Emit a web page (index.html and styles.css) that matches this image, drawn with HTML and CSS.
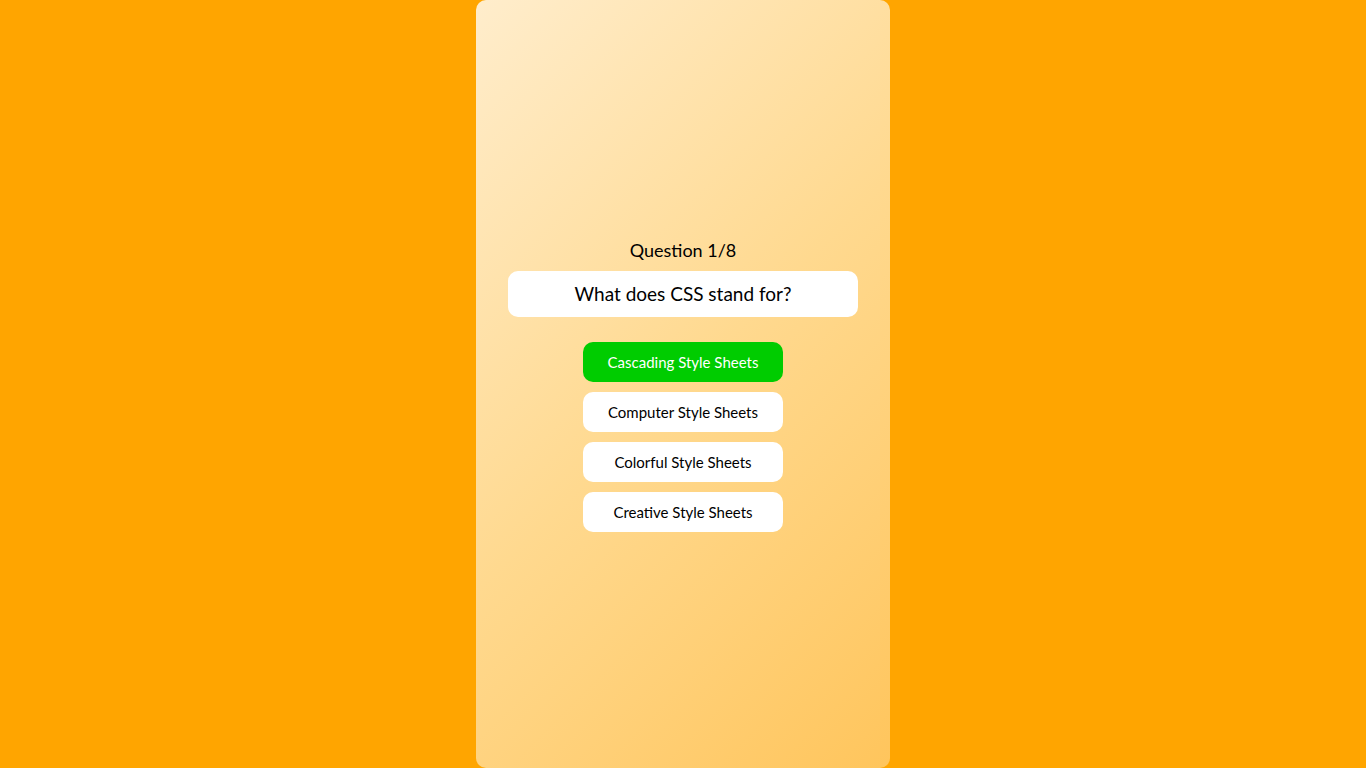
FILE: index.html
```html
<!DOCTYPE html>
<html lang="en">
<head>
<meta charset="utf-8">
<title>Quiz</title>
<link rel="stylesheet" href="styles.css">
</head>
<body>
<main class="card">
  <div class="counter">Question 1/8</div>
  <div class="question">What does CSS stand for?</div>
  <div class="options">
    <button class="option correct">Cascading Style Sheets</button>
    <button class="option">Computer Style Sheets</button>
    <button class="option">Colorful Style Sheets</button>
    <button class="option">Creative Style Sheets</button>
  </div>
</main>
</body>
</html>
```
FILE: styles.css
```css
html, body {
  margin: 0;
  height: 100%;
}
body {
  background: #ffa500;
  font-family: Lato, "Liberation Sans", sans-serif;
  display: flex;
  justify-content: center;
}
.card {
  width: 414px;
  height: 768px;
  border-radius: 10px;
  background: linear-gradient(135deg, #ffedcc 0%, #ffd98f 50%, #ffc55c 100%);
  display: flex;
  flex-direction: column;
  align-items: center;
  justify-content: center;
  box-sizing: border-box;
  padding-top: 2px;
}
.counter {
  font-size: 18px;
  color: #000;
  line-height: 22px;
  margin-bottom: 10px;
}
.question {
  width: 350px;
  height: 46px;
  background: #fff;
  border-radius: 10px;
  display: flex;
  align-items: center;
  justify-content: center;
  font-size: 19px;
  color: #000;
  margin-bottom: 25px;
}
.options {
  display: flex;
  flex-direction: column;
  gap: 10px;
}
.option {
  width: 200px;
  height: 40px;
  border: none;
  border-radius: 10px;
  background: #fff;
  color: #000;
  font-family: inherit;
  font-size: 15px;
  padding: 0;
}
.option.correct {
  background: #00cc00;
  color: #fff;
}
```
